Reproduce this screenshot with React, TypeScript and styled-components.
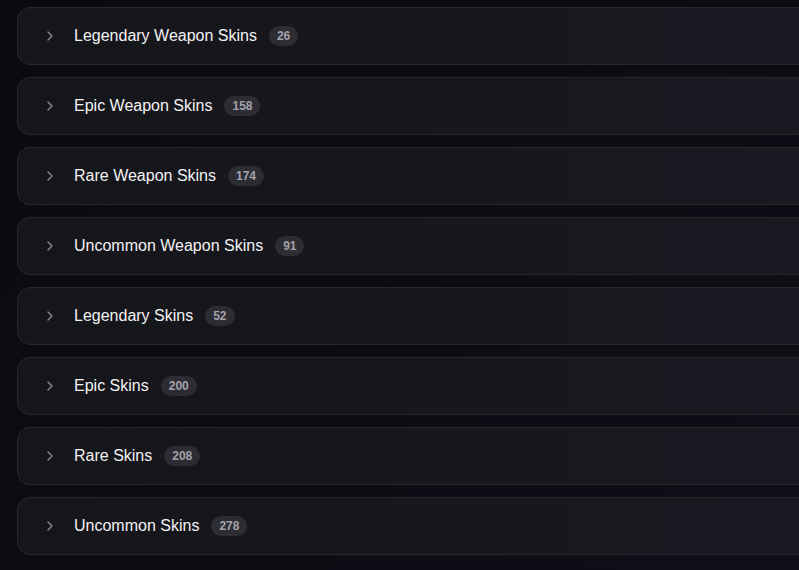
import React from "react";
import styled, { createGlobalStyle } from "styled-components";

const Global = createGlobalStyle`
  html, body { margin: 0; padding: 0; }
  body {
    background: linear-gradient(135deg, #0a0a0e 0%, #0c0c13 50%, #0e0e18 100%);
    min-height: 570px;
    overflow: hidden;
    font-family: "Liberation Sans", Arial, sans-serif;
  }
`;

const List = styled.div`
  display: flex;
  flex-direction: column;
  gap: 12px;
  padding: 7px 0 0 17px;
  width: 820px;
`;

const Card = styled.div`
  display: flex;
  align-items: center;
  height: 56px;
  border: 1px solid #27272e;
  border-radius: 13px;
  background: linear-gradient(90deg, #15161a 0%, #17171e 60%, #191a22 100%);
  padding: 0 0 0 24px;
  box-sizing: content-box;
`;

const Chevron = styled.svg`
  width: 16px;
  height: 16px;
  flex: none;
  color: #8a8a92;
  margin-right: 16px;
`;

const Title = styled.span`
  color: #f2f2f4;
  font-size: 16px;
  font-weight: 500;
  margin-right: 12px;
`;

const Badge = styled.span`
  display: inline-flex;
  align-items: center;
  justify-content: center;
  height: 20px;
  padding: 0 8px;
  border-radius: 10px;
  background: #2c2c32;
  color: #a3a3ab;
  font-size: 12px;
  font-weight: 700;
`;

const items: [string, number][] = [
  ["Legendary Weapon Skins", 26],
  ["Epic Weapon Skins", 158],
  ["Rare Weapon Skins", 174],
  ["Uncommon Weapon Skins", 91],
  ["Legendary Skins", 52],
  ["Epic Skins", 200],
  ["Rare Skins", 208],
  ["Uncommon Skins", 278],
];

export default function App() {
  return (
    <>
      <Global />
      <List>
        {items.map(([name, count]) => (
          <Card key={name}>
            <Chevron viewBox="0 0 24 24" fill="none" stroke="currentColor" strokeWidth={2} strokeLinecap="round" strokeLinejoin="round">
              <path d="m9 18 6-6-6-6" />
            </Chevron>
            <Title>{name}</Title>
            <Badge>{count}</Badge>
          </Card>
        ))}
      </List>
    </>
  );
}
